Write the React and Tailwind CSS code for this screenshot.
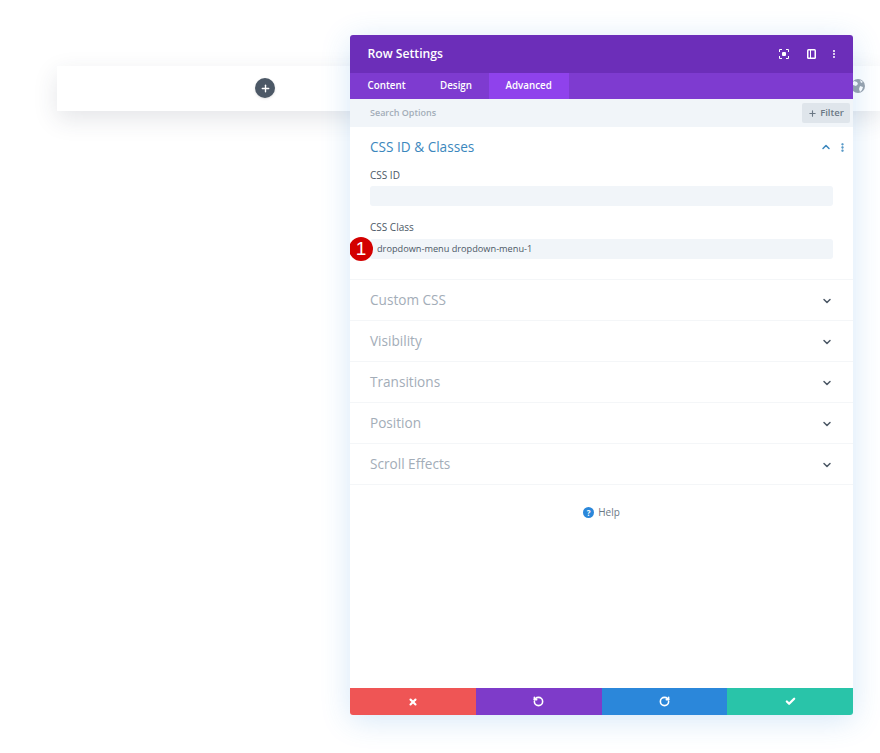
import React from "react";
import { Plus, ChevronDown, ChevronUp, EllipsisVertical, X, RotateCcw, RotateCw, Check } from "lucide-react";

const closedGroups = ["Custom CSS", "Visibility", "Transitions", "Position", "Scroll Effects"];

function Globe() {
  return (
    <svg width="14" height="14" viewBox="0 0 14 14">
      <circle cx="7" cy="7" r="7" fill="#9aa3ad" />
      <path d="M3 2l3 1 1 2-2 2-3-1-1-2zM9 7l3 1-1 3-2 2-1-3zM9 1l3 2-2 1z" fill="#fff" />
    </svg>
  );
}

function ScreenIcon() {
  return (
    <svg width="10" height="10" viewBox="0 0 10 10" fill="none" stroke="#fff" strokeWidth="1">
      <path d="M.5 3V.5H3M7 .5h2.500V3M9.500 7v2.500H7M3 9.500H.5V7" />
      <rect x="3" y="3" width="4" height="4" rx="1" fill="#fff" stroke="none" />
    </svg>
  );
}

function PanelIcon() {
  return (
    <svg width="9" height="10" viewBox="0 0 9 10">
      <rect width="9" height="10" rx="1.500" fill="#fff" />
      <rect x="1.500" y="1.500" width="1.500" height="7" fill="#6c2eb9" />
      <rect x="4" y="1.500" width="3.500" height="7" fill="#6c2eb9" />
    </svg>
  );
}

export default function App() {
  return (
    <div className="relative h-[753px] w-[880px] overflow-hidden bg-white font-['Open_Sans',sans-serif]">
      {/* row behind the modal */}
      <div className="absolute left-[57px] top-[66px] h-[45px] w-[823px] bg-white shadow-[0_8px_24px_rgba(43,55,75,0.13)]">
        <div className="absolute left-[198px] top-[12px] flex h-[20px] w-[20px] items-center justify-center rounded-full bg-[#4c5866] shadow-sm">
          <Plus size={11} strokeWidth={3} className="text-white" />
        </div>
        <div className="absolute left-[784px] top-[4px] flex h-[32px] w-[32px] items-center justify-center rounded-full bg-white pl-[2px]">
          <Globe />
        </div>
      </div>

      <div className="relative ml-[350px] w-[503px] pt-[35px]">
        <div className="flex h-[680px] flex-col overflow-hidden rounded-[3px] bg-white shadow-[0_5px_30px_rgba(43,135,218,0.2)]">
          {/* header */}
          <div className="flex h-[38px] shrink-0 items-center justify-between bg-[#6c2eb9] pl-[17.5px] pr-[14px]">
            <span className="text-[12.2px] font-semibold text-white">Row Settings</span>
            <div className="flex items-center text-white">
              <ScreenIcon />
              <span className="ml-[18px] flex">
                <PanelIcon />
              </span>
              <span className="ml-[13px] flex">
                <EllipsisVertical size={10} strokeWidth={3} />
              </span>
            </div>
          </div>

          {/* tabs */}
          <div className="flex h-[26px] shrink-0 bg-[#7e3bd0] text-[9.8px] font-semibold text-white">
            <div className="flex items-center pl-[17.5px] pr-[17px]">Content</div>
            <div className="flex items-center pl-[17.5px] pr-[16.5px]">Design</div>
            <div className="flex items-center bg-[#8f42ec] px-[17px]">Advanced</div>
          </div>

          {/* search */}
          <div className="flex h-[28px] shrink-0 items-center justify-between bg-[#f1f5f9] pl-[20px] pr-[3px]">
            <span className="text-[9px] font-semibold text-[#a3adb8]">Search Options</span>
            <div className="flex h-[20px] w-[48px] items-center justify-center gap-[3px] rounded-[2px] bg-[#dfe5eb] text-[9.5px] font-semibold text-[#6b7885]">
              <Plus size={9} strokeWidth={3} />
              Filter
            </div>
          </div>

          {/* open group */}
          <div className="border-b border-[#f4f6f8] px-[20px] pb-[20px] pt-[10px]">
            <div className="flex items-center justify-between">
              <span className="text-[13.6px] leading-[20px] text-[#3b87bd]">CSS ID &amp; Classes</span>
              <div className="-mr-[15px] flex items-center gap-[5px] text-[#3b87bd]">
                <ChevronUp size={12} strokeWidth={3} />
                <EllipsisVertical size={11} strokeWidth={3} />
              </div>
            </div>
            <div className="mt-[11px] text-[10px] font-medium leading-[14px] text-[#4c5866]">CSS ID</div>
            <div className="mt-[4px] h-[20px] rounded-[3px] bg-[#f1f5f9]"></div>
            <div className="mt-[14px] text-[10px] font-medium leading-[14px] text-[#4c5866]">CSS Class</div>
            <div className="relative mt-[5px] flex h-[20px] items-center rounded-[3px] bg-[#f1f5f9] pl-[7px] text-[9.2px] font-medium text-[#4c5866]">
              dropdown-menu dropdown-menu-1
              <div className="absolute -left-[21px] top-[-2px] flex h-[24px] w-[24px] items-center justify-center rounded-full bg-[#d30000] font-['Liberation_Sans',sans-serif] text-[19px] font-normal text-white">
                1
              </div>
            </div>
          </div>

          {/* closed groups */}
          {closedGroups.map((name) => (
            <div
              key={name}
              className="flex h-[41px] shrink-0 items-center justify-between border-b border-[#f4f6f8] px-[20px]"
            >
              <span className="text-[13.6px] text-[#a3adb8]">{name}</span>
              <ChevronDown size={12} strokeWidth={3} className="mt-[2px] text-[#4c5866]" />
            </div>
          ))}

          {/* help */}
          <div className="flex justify-center pt-[20px]">
            <div className="flex items-center gap-[4px] text-[10px] font-medium text-[#6b7885]">
              <span className="flex h-[11px] w-[11px] items-center justify-center rounded-full bg-[#2b87da] text-[8px] font-bold text-white">
                ?
              </span>
              Help
            </div>
          </div>

          {/* footer buttons */}
          <div className="mt-auto grid h-[27px] shrink-0 grid-cols-4 text-white">
            <div className="flex items-center justify-center bg-[#ef5555]">
              <X size={10} strokeWidth={5} />
            </div>
            <div className="flex items-center justify-center bg-[#7e3bc9]">
              <RotateCcw size={11} strokeWidth={3.5} />
            </div>
            <div className="flex items-center justify-center bg-[#2b87da]">
              <RotateCw size={11} strokeWidth={3.5} />
            </div>
            <div className="flex items-center justify-center bg-[#29c4a9]">
              <Check size={11} strokeWidth={5} />
            </div>
          </div>
        </div>
      </div>
    </div>
  );
}
